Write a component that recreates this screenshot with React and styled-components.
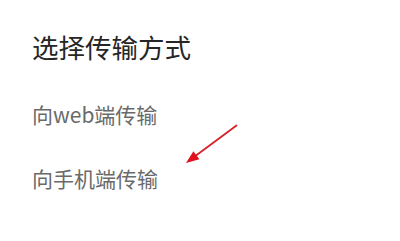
import React from "react";
import styled, { createGlobalStyle } from "styled-components";

const Global = createGlobalStyle`
  html, body { margin: 0; padding: 0; background: #ffffff; }
  body { font-family: "Noto Sans CJK SC", "Noto Sans", sans-serif; }
`;

const Page = styled.div`
  position: relative;
  width: 400px;
  height: 241px;
  background: #fff;
  box-sizing: border-box;
  padding: 33px 0 0 32px;
  display: flex;
  flex-direction: column;
`;

const Title = styled.div`
  font-size: 26.5px;
  line-height: 27px;
  color: #262626;
  margin-bottom: 44px;
`;

const Option = styled.div`
  font-size: 21px;
  line-height: 21px;
  color: #6a6a6a;
  margin-bottom: ${(p) => p.$gap || 0}px;
`;

const Arrow = styled.svg`
  position: absolute;
  left: 180px;
  top: 118px;
`;

export default function App() {
  return (
    <>
      <Global />
      <Page>
        <Title>选择传输方式</Title>
        <Option $gap={43}>向web端传输</Option>
        <Option>向手机端传输</Option>
        <Arrow width="64" height="52" viewBox="0 0 64 52">
          <line x1="56.5" y1="7.5" x2="14" y2="39" stroke="#d8222a" strokeWidth="1.8" strokeLinecap="round" />
          <polygon points="6,45 19.4,41.3 13.4,33.3" fill="#e0101e" />
        </Arrow>
      </Page>
    </>
  );
}
